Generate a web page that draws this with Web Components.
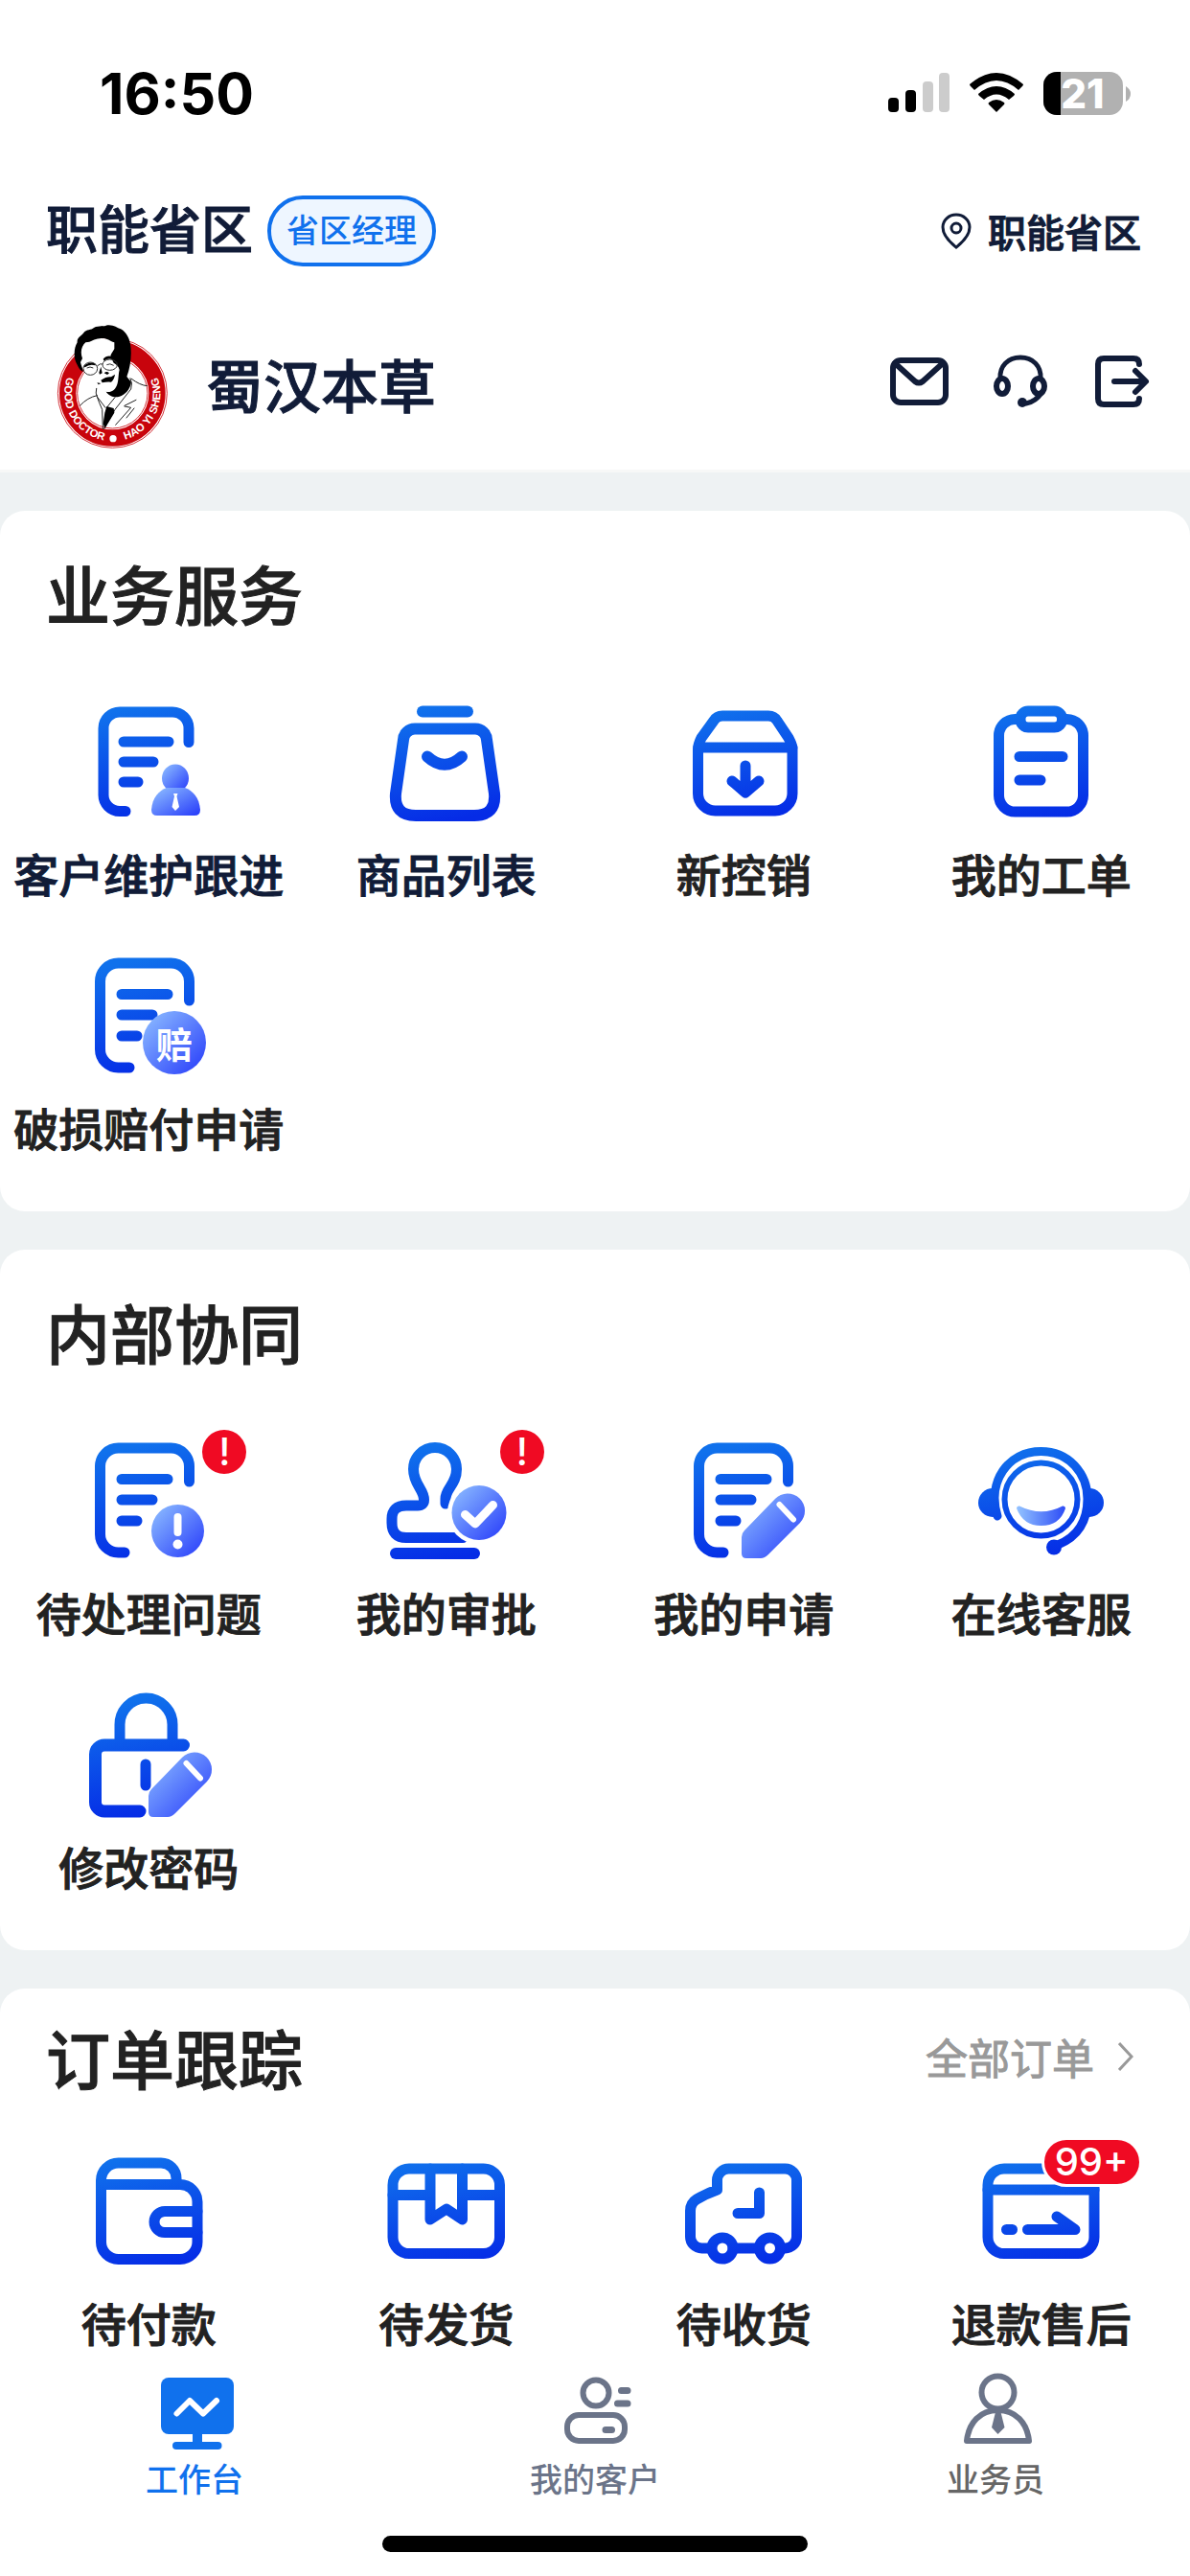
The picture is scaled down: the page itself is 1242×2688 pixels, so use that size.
<!DOCTYPE html>
<html lang="zh-CN">
<head>
<meta charset="UTF-8">
<meta name="viewport" content="width=device-width, initial-scale=1.0">
<title>工作台</title>
<style>
    body {
        margin: 0;
        background: #eef2f3;
        color: #222;
        font-family: "Noto Sans CJK SC", sans-serif;
        font-weight: 500;
    }
</style>
</head>
<body>

<work-page>
    <status-bar slot="header" time="16:50" battery="21"></status-bar>
    <region-bar slot="header" role-name="省区经理" location="职能省区">职能省区</region-bar>
    <user-bar slot="header">蜀汉本草</user-bar>

    <menu-card heading="业务服务">
        <menu-item icon="doc-person" tone="navy">客户维护跟进</menu-item>
        <menu-item icon="bag" tone="navy">商品列表</menu-item>
        <menu-item icon="box">新控销</menu-item>
        <menu-item icon="clipboard">我的工单</menu-item>
        <menu-item icon="doc-pay">破损赔付申请</menu-item>
    </menu-card>

    <menu-card heading="内部协同">
        <menu-item icon="doc-alert" badge="!">待处理问题</menu-item>
        <menu-item icon="stamp" badge="!">我的审批</menu-item>
        <menu-item icon="doc-pencil">我的申请</menu-item>
        <menu-item icon="service">在线客服</menu-item>
        <menu-item icon="lock">修改密码</menu-item>
    </menu-card>

    <menu-card heading="订单跟踪" more="全部订单" compact>
        <menu-item icon="wallet">待付款</menu-item>
        <menu-item icon="package">待发货</menu-item>
        <menu-item icon="truck">待收货</menu-item>
        <menu-item icon="refund" badge="99+">退款售后</menu-item>
    </menu-card>

    <tab-bar slot="footer">
        <tab-item icon="monitor" active>工作台</tab-item>
        <tab-item icon="customers">我的客户</tab-item>
        <tab-item icon="salesman" tone="plain">业务员</tab-item>
    </tab-bar>
</work-page>

<script>
// Shared shapes for the menu icons, drawn on a 150 x 150 grid
const DOC = `
    <path d="M117.5 54V38a19 19 0 0 0-19-19H43.5a19 19 0 0 0-19 19V109a19 19 0 0 0 19 19H50"/>
    <path d="M47 51.5H95M47 73H79M47 95H63"/>`;
const PENCIL = `
    <path class="tint" d="M73 129V112Q73 108 76 105L108 72A18 18 0 0 1 134 97L101 130Q97 134 93 134H78Q73 134 73 129Z"/>
    <path class="white" stroke-width="6" d="M112.5 78L127 93.5"/>`;

const MENU_ICONS = {
    'doc-person': `
        <path d="M117 53.5V39a17 17 0 0 0-17-17H45a17 17 0 0 0-17 17V108a17 17 0 0 0 17 17.5H51"/>
        <path d="M49 53H96M49 74H80M49 95H64"/>
        <ellipse class="tint" cx="103" cy="91" rx="14" ry="14.5"/>
        <path class="tint" d="M84 130Q78 130 78 124C79 111 86 104 94 101H113C121 104 128 111 129 124Q129 130 123 130Z"/>
        <path fill="#fff" stroke="none" d="M101 107H105.5L104.5 110L107 121L103 125L99.5 121L102 110Z"/>`,
    'bag': `
        <path stroke-width="12" d="M50 21.5H97"/>
        <path stroke-width="12" d="M42 39.5H105A12 12 0 0 1 117 51L125 107Q127 130 104 130H43Q20 130 22 107L30 51A12 12 0 0 1 42 39.5Z"/>
        <path stroke-width="12" d="M55 68.5Q73 85 91 68.5"/>`,
    'box': `
        <path d="M27.5 61C27.5 56 29 53 31 49L44 31Q47 26 53 26H101Q107 26 110 31L122 49C124 53 126 56 126 61V107A18 18 0 0 1 108 125H45.5A18 18 0 0 1 27.5 107Z"/>
        <path d="M28 59H126M77 78V105M63 94L77 106L91 94"/>`,
    'clipboard': `
        <path d="M50 29.5H47.5A17 17 0 0 0 30.5 46.5V109A17 17 0 0 0 47.5 126H101.5A17 17 0 0 0 118.5 109V46.5A17 17 0 0 0 101.5 29.5H99"/>
        <rect x="53" y="21" width="43.5" height="17" rx="8"/>
        <path d="M52 68.5H97M52 93H74"/>`,
    'doc-pay': `
        <path d="M117.5 58V38a19 19 0 0 0-19-19H43.5a19 19 0 0 0-19 19V109a19 19 0 0 0 19 19H55"/>
        <path d="M47 51.5H95M47 73H79M47 95H63"/>
        <circle class="tint" cx="102" cy="102" r="33"/>
        <text x="102" y="118" text-anchor="middle" font-size="38" font-weight="700" fill="#fff" stroke="none">赔</text>`,
    'doc-alert': `${DOC}
        <circle class="tint" cx="105.5" cy="105.5" r="27.5"/>
        <path class="white" stroke-width="8" d="M105.5 91V107"/>
        <circle cx="105.5" cy="119.5" r="5" fill="#fff" stroke="none"/>`,
    'stamp': `
        <path d="M74 77V72C74 61 85.5 57 85.5 41A22.5 22.5 0 0 0 40.5 41C40.5 57 51.5 62 51.5 73Q51.5 79 45 79H33Q18 79 18 93V97Q18 112.5 33 112.5H92"/>
        <path stroke-width="12" d="M22 129H104"/>
        <circle cx="109" cy="86.5" r="33" fill="#fff" stroke="none"/>
        <circle class="tint" cx="109" cy="86.5" r="28.5"/>
        <path class="white" stroke-width="9" d="M94.5 88.5L105 98L123.5 78.5"/>`,
    'doc-pencil': `<g transform="translate(4 0)">${DOC}</g>${PENCIL}`,
    'service': `
        <circle class="solid" cx="24" cy="76" r="15"/>
        <circle class="solid" cx="125" cy="76" r="15"/>
        <circle cx="74.5" cy="72" r="46" fill="#fff" stroke="none"/>
        <path stroke-width="9" d="M29 90C18 54 40 22.5 74.5 22.5C104 22.5 123 46 123 72C123 96 112 112 92 120"/>
        <circle class="solid" cx="88" cy="122.5" r="8"/>
        <circle cx="74.5" cy="72.5" r="38" stroke-width="6"/>
        <path fill="url(#smile)" stroke="none" d="M52 79.5Q75 91 97 79.5Q100 79 100 82Q94 100 74.5 100Q56 100 49 82Q49 79 52 79.5Z"/>`,
    'lock': `
        <path stroke-linecap="butt" d="M45 60V42.5A27.5 27.5 0 0 1 100 42.5V60"/>
        <path stroke-width="13" d="M111.5 64H29A9.5 9.5 0 0 0 19.5 73.5V123.5A9.5 9.5 0 0 0 29 133H66"/>
        <path d="M72 84V106"/>
        <g transform="translate(2 5)">${PENCIL}</g>`,
    'wallet': `
        <path d="M25.5 49V42A18 18 0 0 1 43.5 24H88A16 16 0 0 1 104 40V46"/>
        <path d="M25.5 46.5H108A18 18 0 0 1 126 64.5V106.5A18 18 0 0 1 108 124.5H43.5A18 18 0 0 1 25.5 106.5Z"/>
        <path d="M126 74.5H92A11 11 0 0 0 92 96.5H126"/>`,
    'package': `
        <rect x="19" y="30" width="111.5" height="88.5" rx="17"/>
        <path d="M19 57.5H58M91.5 57.5H130M58 30V83L75 72L91.5 83V30"/>`,
    'truck': `
        <path d="M64 113H91M41 113H31.5A12 12 0 0 1 19.5 101V74Q19.5 66 26 62Q36 56 47.5 52V42A12 12 0 0 1 59.5 30H118.5A12 12 0 0 1 130.5 42V101A12 12 0 0 1 118.5 113H114"/>
        <circle cx="53" cy="113" r="11"/>
        <circle cx="102.5" cy="113" r="11"/>
        <path d="M91.5 55V76.5H69"/>`,
    'refund': `
        <rect x="19" y="30" width="111" height="88.5" rx="17"/>
        <path d="M19 52H130M38.5 93.5H44.5M60.5 93.5H110L91 80"/>`
};

// Tab icons use an 84 x 84 grid and the colour of their tab
const TAB_ICONS = {
    'monitor': `
        <rect x="7" y="5" width="76" height="59" rx="8" fill="currentColor" stroke="none"/>
        <path fill="currentColor" stroke="none" d="M40 62H50V74H40Z"/>
        <path stroke-width="8" d="M23 76H66.5"/>
        <path stroke="#fff" stroke-width="6" d="M23.5 42.5L37 29L51 42.5L65 29"/>`,
    'customers': `
        <circle cx="43" cy="21" r="13.5"/>
        <rect x="13" y="44" width="60" height="27" rx="12"/>
        <path stroke-width="7" d="M69.5 18.5H76M65.5 32H76M53 59.5H59.5"/>`,
    'salesman': `
        <circle cx="44.5" cy="20.5" r="17"/>
        <path d="M12 71C14 52 26 39 44.5 39C63 39 75 52 77 71Z"/>
        <path fill="currentColor" stroke="none" d="M42 41H47.5L51.5 57L44.5 64L38 57Z"/>`
};

class MenuIcon extends HTMLElement {
    connectedCallback() {
        this.attachShadow({ mode: 'open' });
        this.shadowRoot.innerHTML = `
            <style>
                :host { display: block; }
                svg {
                    display: block;
                    width: 150px;
                    height: 150px;
                    fill: none;
                    stroke: url(#line);
                    stroke-width: 11;
                    stroke-linecap: round;
                    stroke-linejoin: round;
                }
                .tint { fill: url(#tint); stroke: none; }
                .solid { fill: url(#line); stroke: none; }
                .white { stroke: #fff; }
            </style>
            <svg viewBox="0 0 150 150" aria-hidden="true">
                <defs>
                    <linearGradient id="line" gradientUnits="userSpaceOnUse" x1="62" y1="16" x2="88" y2="134">
                        <stop offset="0" stop-color="#1071ec"/>
                        <stop offset="1" stop-color="#052be6"/>
                    </linearGradient>
                    <linearGradient id="tint" x1="0" y1="0" x2="1" y2="1">
                        <stop offset="0.1" stop-color="#86b4ff"/>
                        <stop offset="1" stop-color="#2539fa"/>
                    </linearGradient>
                    <linearGradient id="smile">
                        <stop offset="0" stop-color="#93c3ff"/>
                        <stop offset="1" stop-color="#2d4cf6"/>
                    </linearGradient>
                </defs>
                ${MENU_ICONS[this.getAttribute('name')] || ''}
            </svg>
        `;
    }
}

class StatusBar extends HTMLElement {
    connectedCallback() {
        this.attachShadow({ mode: 'open' });
        this.shadowRoot.innerHTML = `
            <style>
                :host {
                    display: flex;
                    align-items: center;
                    justify-content: space-between;
                    height: 194px;
                    padding: 0 62px 2px 104px;
                    color: #000;
                    font-family: Inter, sans-serif;
                }
                .time { font-size: 59px; font-weight: 700; }
                .icons { display: flex; align-items: center; gap: 21px; }
                svg { display: block; overflow: visible; }
                .battery text { font-size: 42px; font-weight: 800; fill: #fff; }
            </style>
            <span class="time">${this.getAttribute('time')}</span>
            <div class="icons">
                <svg width="64" height="42" viewBox="0 0 64 42" aria-hidden="true">
                    <rect x="0" y="26" width="11" height="15" rx="4"/>
                    <rect x="18" y="18" width="11" height="23" rx="4"/>
                    <rect x="36" y="9" width="11" height="32" rx="4" fill="#ccc"/>
                    <rect x="53" y="0" width="11" height="41" rx="4" fill="#ccc"/>
                </svg>
                <svg width="56" height="42" viewBox="0 0 56 42" aria-hidden="true">
                    <path d="M28 41L20 33Q19 32 20 31Q28 25 36 31Q37 32 36 33Z"/>
                    <path d="M9 22Q28 6 47 22Q47 23 46 24L41 28Q28 17 15 28L10 24Q9 23 9 22Z"/>
                    <path d="M0 12Q28-12 56 12Q56 13 55 14L51 18Q28-2 5 18L1 14Q0 13 0 12Z"/>
                </svg>
                <svg class="battery" width="91" height="45" viewBox="0 0 91 45" role="img">
                    <rect width="83" height="45" rx="14" fill="#b1b1b1"/>
                    <path d="M14 0H18V45H14A14 14 0 0 1 0 31V14A14 14 0 0 1 14 0Z"/>
                    <path fill="#b1b1b1" d="M86 15Q91 18 91 23Q91 28 86 31Z"/>
                    <text x="41" y="38" text-anchor="middle">${this.getAttribute('battery')}</text>
                </svg>
            </div>
        `;
    }
}

class RegionBar extends HTMLElement {
    connectedCallback() {
        this.attachShadow({ mode: 'open' });
        this.shadowRoot.innerHTML = `
            <style>
                :host {
                    display: flex;
                    align-items: center;
                    height: 90px;
                    padding: 0 51px 0 48px;
                    color: #111c38;
                }
                .name {
                    margin-bottom: 8px;
                    font-size: 54px;
                    line-height: 66px;
                    -webkit-text-stroke: 1px currentColor;
                }
                .role {
                    box-sizing: border-box;
                    height: 74px;
                    margin-left: 15px;
                    padding: 0 16px;
                    border: 4px solid #1071ed;
                    border-radius: 37px;
                    background: #eef6ff;
                    color: #1071ed;
                    font-size: 34px;
                    line-height: 62px;
                }
                .place {
                    display: flex;
                    align-items: center;
                    gap: 17px;
                    margin-left: auto;
                    padding: 0;
                    border: 0;
                    background: none;
                    color: inherit;
                    font: inherit;
                    font-size: 40px;
                    line-height: 60px;
                    -webkit-text-stroke: 1px currentColor;
                }
            </style>
            <span class="name"><slot></slot></span>
            <span class="role">${this.getAttribute('role-name')}</span>
            <button class="place" type="button">
                <svg width="32" height="38" viewBox="0 0 32 38" fill="none" stroke="currentColor" stroke-width="3" aria-hidden="true">
                    <path d="M16 36Q2 25 2 15A14 13 0 0 1 30 15Q30 25 16 36Z"/>
                    <circle cx="16" cy="16" r="5"/>
                </svg>
                <span>${this.getAttribute('location')}</span>
            </button>
        `;
    }
}

class BrandLogo extends HTMLElement {
    connectedCallback() {
        this.attachShadow({ mode: 'open' });
        this.shadowRoot.innerHTML = `
            <style>
                :host { display: block; }
                svg { display: block; width: 120px; height: 130px; }
                text {
                    font-family: "Liberation Sans", Arial, sans-serif;
                    font-size: 34px;
                    font-weight: 700;
                    fill: #fff;
                }
            </style>
            <svg viewBox="51 57 360 390" role="img">
                <defs><path id="ring" d="M102 196A150 150 0 1 0 362 196"/></defs>
                <circle cx="232" cy="271" r="171" fill="#fff" stroke="#d4333a" stroke-width="3"/>
                <circle cx="232" cy="271" r="140" fill="none" stroke="#c8040c" stroke-width="52"/>
                <circle cx="232" cy="271" r="110" fill="none" stroke="#d4333a" stroke-width="3"/>
                <text text-anchor="middle"><textPath href="#ring" startOffset="25%">GOOD DOCTOR</textPath></text>
                <text text-anchor="middle"><textPath href="#ring" startOffset="76%">HAO YI SHENG</textPath></text>
                <circle cx="234" cy="413" r="11" fill="#fff"/>
                <path fill="#fff" d="M124 170Q120 120 160 100H240L262 200L230 270L186 250L180 220L146 208Z"/>
                <path d="M122 182C108 160 112 128 122 112C120 96 136 92 142 82C150 70 166 74 174 66C190 58 206 64 216 58C236 56 246 66 258 70C276 80 284 98 288 116C294 150 288 190 277 219L291 236C288 256 276 274 252 282C236 286 220 278 212 266C226 270 240 262 246 246C252 232 250 212 254 198C252 186 244 180 236 176L228 160C222 152 232 144 238 132V112C220 106 214 96 192 100C174 100 166 112 148 112C136 122 130 142 138 162L132 174C134 184 140 196 140 204C132 200 126 192 122 182Z"/>
                <path d="M203 164Q214 150 232 156L234 166Q216 160 206 170ZM142 186Q158 170 178 178L180 184Q160 178 146 190Z"/>
                <g fill="none" stroke="#333" stroke-width="3">
                    <ellipse cx="163" cy="194" rx="22" ry="20"/>
                    <ellipse cx="224" cy="182" rx="23" ry="17"/>
                    <path d="M184 186Q194 176 202 180M152 192Q162 186 172 192M214 182Q224 176 236 184"/>
                </g>
                <path d="M196 188L200 208L192 212L190 206ZM206 208Q214 200 222 208L216 213ZM196 230Q214 218 228 220L240 212Q238 228 228 236Q216 234 200 238ZM184 238L196 240L188 244Z"/>
                <g fill="none" stroke="#222" stroke-width="3" stroke-linecap="round">
                    <path d="M182 256Q178 272 184 282L210 316M130 310Q154 284 184 278M288 224Q296 240 290 258L240 322L206 382M184 282Q190 300 200 322L202 382"/>
                    <path d="M292 226Q318 246 340 248M240 284L214 316M270 310L306 292M270 312L290 316L242 370M300 318L276 348"/>
                </g>
                <path d="M214 312L236 318L238 332L208 382L203 366L208 332Z"/>
            </svg>
        `;
    }
}

class UserBar extends HTMLElement {
    connectedCallback() {
        this.attachShadow({ mode: 'open' });
        this.shadowRoot.innerHTML = `
            <style>
                :host {
                    display: flex;
                    align-items: center;
                    padding: 53px 39px 21px 57px;
                    border-bottom: 3px solid #f7f8f7;
                    color: #111c38;
                }
                .name {
                    margin: 0 0 8px 38px;
                    font-size: 60px;
                    line-height: 80px;
                    -webkit-text-stroke: 1px currentColor;
                }
                .tools { display: flex; gap: 42px; margin-left: auto; }
                button {
                    padding: 0;
                    border: 0;
                    background: none;
                    color: inherit;
                }
                svg {
                    display: block;
                    width: 64px;
                    height: 76px;
                    fill: none;
                    stroke: currentColor;
                    stroke-width: 6;
                    stroke-linecap: round;
                    stroke-linejoin: round;
                }
            </style>
            <brand-logo></brand-logo>
            <span class="name"><slot></slot></span>
            <div class="tools">
                <button type="button" aria-label="消息">
                    <svg viewBox="0 0 64 76">
                        <rect x="5" y="10" width="55" height="44" rx="8"/>
                        <path d="M7 13L28 32Q32 35 36 32L57 13"/>
                    </svg>
                </button>
                <button type="button" aria-label="客服">
                    <svg viewBox="0 0 64 76">
                        <path stroke-width="5" d="M11 29C10 16 19 7 32 7C45 7 54 16 53 29"/>
                        <ellipse cx="13" cy="37" rx="6" ry="8"/>
                        <ellipse cx="51" cy="37" rx="6" ry="8"/>
                        <path stroke-width="5" d="M54 44Q48 53 38 55"/>
                        <circle cx="34" cy="54" r="5" fill="currentColor" stroke="none"/>
                    </svg>
                </button>
                <button type="button" aria-label="退出">
                    <svg viewBox="0 0 64 76">
                        <path d="M50 14Q50 8 44 8H13Q7 8 7 14V50Q7 56 13 56H44Q50 56 50 50"/>
                        <path d="M24 32H56M46 21L57 32L46 43"/>
                    </svg>
                </button>
            </div>
        `;
    }
}

class MenuCard extends HTMLElement {
    connectedCallback() {
        const more = this.getAttribute('more');
        this.attachShadow({ mode: 'open' });
        this.shadowRoot.innerHTML = `
            <style>
                :host {
                    display: block;
                    padding: 38px 0 56px;
                    border-radius: 26px;
                    background: #fff;
                }
                :host([compact]) {
                    flex: 1;
                    padding: 24px 0 0;
                    border-radius: 26px 26px 0 0;
                }
                header {
                    display: flex;
                    align-items: center;
                    justify-content: space-between;
                    padding: 0 59px 0 48px;
                    margin-bottom: 56px;
                }
                :host([compact]) header { margin-bottom: 40px; }
                h2 {
                    margin: 0;
                    font-size: 67px;
                    font-weight: 500;
                    line-height: 94px;
                    -webkit-text-stroke: 1px currentColor;
                }
                a {
                    display: flex;
                    align-items: center;
                    gap: 25px;
                    color: #999;
                    font-size: 44px;
                    font-weight: 400;
                    line-height: 66px;
                    text-decoration: none;
                    -webkit-text-stroke: 1px currentColor;
                }
                .grid {
                    display: grid;
                    grid-template-columns: repeat(4, 1fr);
                    row-gap: 43px;
                }
            </style>
            <header>
                <h2>${this.getAttribute('heading')}</h2>
                ${more ? `<a href="#">${more}
                    <svg width="16" height="30" viewBox="0 0 16 30" fill="none" stroke="currentColor" stroke-width="3" aria-hidden="true">
                        <path d="M1 1L14 15L1 29"/>
                    </svg></a>` : ''}
            </header>
            <div class="grid"><slot></slot></div>
        `;
    }
}

class MenuItem extends HTMLElement {
    connectedCallback() {
        const badge = this.getAttribute('badge');
        this.attachShadow({ mode: 'open' });
        this.shadowRoot.innerHTML = `
            <style>
                :host { display: block; color: #222; }
                :host([tone="navy"]) { color: #111c38; }
                a {
                    display: flex;
                    flex-direction: column;
                    align-items: center;
                    color: inherit;
                    text-decoration: none;
                }
                .icon { position: relative; }
                .label {
                    margin-top: 8px;
                    font-size: 47px;
                    line-height: 64px;
                    white-space: nowrap;
                    -webkit-text-stroke: 1px currentColor;
                }
                .badge {
                    position: absolute;
                    top: -3px;
                    right: -30px;
                    box-sizing: border-box;
                    min-width: 52px;
                    padding: 0 11px;
                    border: 3px solid #fff;
                    border-radius: 26px;
                    background: #f00a23;
                    color: #fff;
                    font-family: Inter, sans-serif;
                    font-size: 40px;
                    line-height: 46px;
                    text-align: center;
                }
            </style>
            <a href="#">
                <span class="icon">
                    <menu-icon name="${this.getAttribute('icon')}"></menu-icon>
                    ${badge ? `<span class="badge">${badge}</span>` : ''}
                </span>
                <span class="label"><slot></slot></span>
            </a>
        `;
    }
}

class TabItem extends HTMLElement {
    connectedCallback() {
        this.attachShadow({ mode: 'open' });
        this.shadowRoot.innerHTML = `
            <style>
                :host { display: block; color: #6b7489; }
                :host([active]) { color: #1071ed; }
                :host([tone="plain"]) .label { color: #666; }
                a {
                    display: flex;
                    flex-direction: column;
                    align-items: center;
                    color: inherit;
                    text-decoration: none;
                }
                svg {
                    display: block;
                    width: 84px;
                    height: 84px;
                    fill: none;
                    stroke: currentColor;
                    stroke-width: 6;
                    stroke-linecap: round;
                    stroke-linejoin: round;
                }
                .label { margin-top: 4px; font-size: 34px; line-height: 44px; }
            </style>
            <a href="#">
                <svg viewBox="0 0 84 84" aria-hidden="true">${TAB_ICONS[this.getAttribute('icon')] || ''}</svg>
                <span class="label"><slot></slot></span>
            </a>
        `;
    }
}

class TabBar extends HTMLElement {
    connectedCallback() {
        this.attachShadow({ mode: 'open' });
        this.shadowRoot.innerHTML = `
            <style>
                :host {
                    display: block;
                    padding: 16px 0 25px;
                    background: #fff;
                }
                nav {
                    display: flex;
                    justify-content: space-between;
                    padding: 0 152px;
                }
                .home {
                    width: 444px;
                    height: 17px;
                    margin: 38px auto 0;
                    border-radius: 9px;
                    background: #000;
                }
            </style>
            <nav><slot></slot></nav>
            <div class="home"></div>
        `;
    }
}

class WorkPage extends HTMLElement {
    connectedCallback() {
        this.attachShadow({ mode: 'open' });
        this.shadowRoot.innerHTML = `
            <style>
                :host {
                    display: flex;
                    flex-direction: column;
                    min-height: 100vh;
                }
                header { background: #fff; }
                main {
                    flex: 1;
                    display: flex;
                    flex-direction: column;
                    gap: 40px;
                    padding-top: 40px;
                }
            </style>
            <header><slot name="header"></slot></header>
            <main><slot></slot></main>
            <footer><slot name="footer"></slot></footer>
        `;
    }
}

customElements.define('menu-icon', MenuIcon);
customElements.define('status-bar', StatusBar);
customElements.define('region-bar', RegionBar);
customElements.define('brand-logo', BrandLogo);
customElements.define('user-bar', UserBar);
customElements.define('menu-item', MenuItem);
customElements.define('menu-card', MenuCard);
customElements.define('tab-item', TabItem);
customElements.define('tab-bar', TabBar);
customElements.define('work-page', WorkPage);
</script>
</body>
</html>
